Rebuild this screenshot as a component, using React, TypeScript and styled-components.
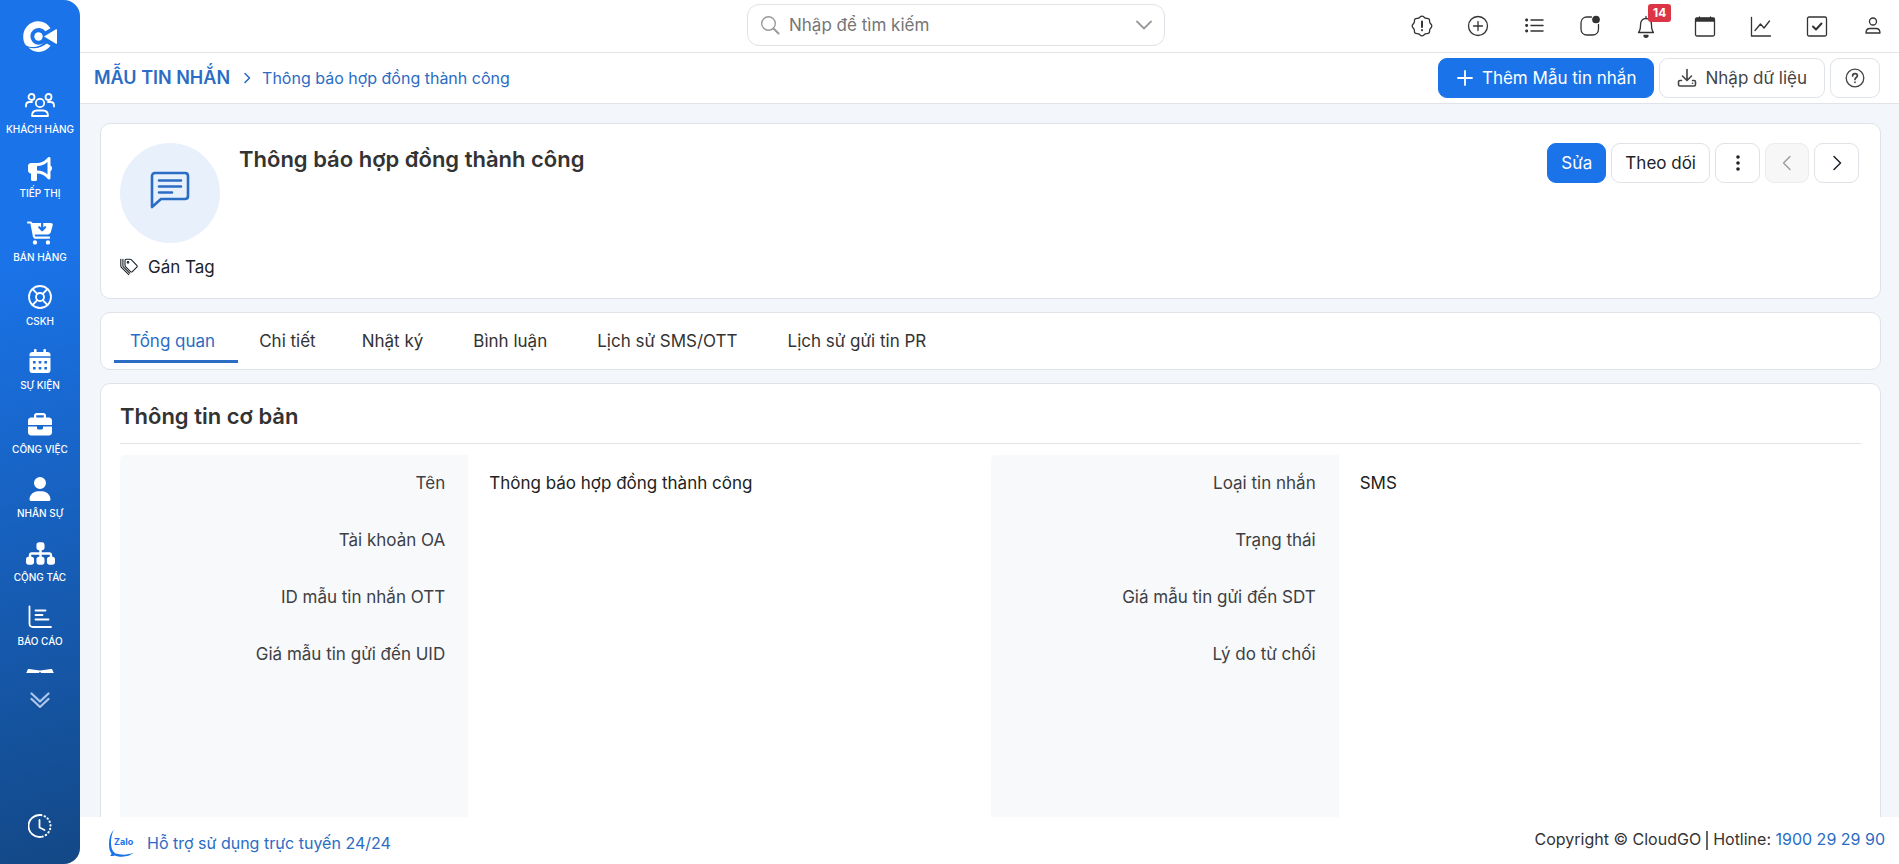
import React from "react";
import styled, { createGlobalStyle, css } from "styled-components";
import { FaBullhorn, FaCartArrowDown, FaBriefcase, FaUser, FaSitemap } from "react-icons/fa6";

const color = {
  primary: "#1a73e8",
  link: "#2b6cc4",
  text: "#333333",
  dark: "#1c2329",
  border: "#dfe2e6",
  canvas: "#f3f7fb",
  label: "#f8f9fb",
};

const GlobalStyle = createGlobalStyle`
  *, *::before, *::after { box-sizing: border-box; }
  body {
    margin: 0;
    font-family: Inter, "Liberation Sans", sans-serif;
    font-size: 17px;
    line-height: 24px;
    color: ${color.text};
    background: #fff;
  }
  button, input { font: inherit; color: inherit; }
  a { color: ${color.link}; text-decoration: none; }
  h1, h2, ul, ol, dl, dd, p { margin: 0; padding: 0; }
  ul, ol { list-style: none; }
  svg { display: block; flex: none; }
`;

const Page = styled.div`
  display: flex;
  height: 100vh;
`;

/* Sidebar */

const Sidebar = styled.aside`
  flex: none;
  display: flex;
  flex-direction: column;
  align-items: center;
  width: 80px;
  padding: 20px 0 26px;
  color: #fff;
  background: linear-gradient(165deg, #1a73e8 0%, #1a73e8 30%, #134886 100%);
  border-radius: 0 16px 16px 0;
`;

const SideNav = styled.nav`
  flex: 0 1 580px;
  min-height: 0;
  width: 100%;
  margin-top: 40px;
  overflow: hidden;
`;

const SideLink = styled.a`
  display: flex;
  flex-direction: column;
  align-items: center;
  gap: 5px;
  height: 64px;
  color: #fff;
  font-size: 10px;
  font-weight: 500;
  line-height: 14px;
  white-space: nowrap;
`;

const SideIcon = styled.span`
  display: flex;
  align-items: center;
  justify-content: center;
  height: 24px;
`;

const SideButton = styled.button<{ $bottom?: boolean }>`
  padding: 0;
  border: 0;
  background: none;
  color: #fff;
  cursor: pointer;
  margin-top: ${(p) => (p.$bottom ? "auto" : "18px")};
`;

/* Top bars */

const Main = styled.div`
  flex: 1;
  min-width: 0;
  display: flex;
  flex-direction: column;
`;

const TopBar = styled.header`
  flex: none;
  display: grid;
  grid-template-columns: 667fr 418fr 734fr;
  align-items: center;
  height: 53px;
  padding-bottom: 2px;
  border-bottom: 1px solid ${color.border};
`;

const SearchBox = styled.label`
  grid-column: 2;
  display: flex;
  align-items: center;
  gap: 9px;
  height: 42px;
  padding: 0 12px;
  border: 1px solid ${color.border};
  border-radius: 12px;
  color: #9a9a9a;
`;

const SearchInput = styled.input`
  flex: 1;
  min-width: 0;
  padding: 0;
  border: 0;
  outline: 0;
  background: none;
  &::placeholder { color: #757575; opacity: 1; }
`;

const Tools = styled.div`
  display: flex;
  justify-content: flex-end;
  gap: 35px;
  padding: 2px 14px 0 0;
`;

const ToolGroup = styled.div`
  display: flex;
  gap: 32px;
`;

const ToolButton = styled.button`
  position: relative;
  display: flex;
  align-items: center;
  justify-content: center;
  width: 24px;
  height: 24px;
  padding: 0;
  border: 0;
  background: none;
  cursor: pointer;
`;

const Badge = styled.span`
  position: absolute;
  left: 14px;
  top: -10px;
  padding: 0 5px;
  border-radius: 3px;
  background: #dc3545;
  color: #fff;
  font-size: 12px;
  font-weight: 700;
  line-height: 18px;
`;

const ActionBar = styled.div`
  flex: none;
  display: flex;
  align-items: center;
  justify-content: space-between;
  height: 51px;
  padding: 0 19px 0 14px;
  border-bottom: 1px solid ${color.border};
`;

const Crumbs = styled.ol`
  display: flex;
  align-items: center;
  gap: 11px;
  font-size: 16px;
  color: ${color.link};
`;

const CrumbItem = styled.li<{ $lead?: boolean }>`
  display: flex;
  align-items: center;
  gap: 13px;
  ${(p) => p.$lead && css`font-size: 18px; font-weight: 600;`}
`;

const ButtonRow = styled.div`
  display: flex;
  gap: 5px;
`;

const Button = styled.button<{ $primary?: boolean; $wide?: boolean; $icon?: number }>`
  display: flex;
  align-items: center;
  justify-content: center;
  gap: 8px;
  height: 40px;
  padding: 0 ${(p) => (p.$icon ? 0 : p.$wide ? 17 : 13)}px;
  ${(p) => p.$icon && `width: ${p.$icon}px;`}
  border: 1px solid ${(p) => (p.$primary ? color.primary : color.border)};
  border-radius: 9px;
  background: ${(p) => (p.$primary ? color.primary : "#fff")};
  color: ${(p) => (p.$primary ? "#fff" : p.$wide ? "#444" : color.dark)};
  white-space: nowrap;
  cursor: pointer;
  &:disabled { background: #f7f7f7; color: #999; border-color: #ececec; }
`;

/* Content */

const Content = styled.main`
  flex: 1;
  min-height: 0;
  display: flex;
  flex-direction: column;
  gap: 13px;
  padding: 19px 18px 0 20px;
  background: ${color.canvas};
  overflow-y: auto;
  scrollbar-width: none;
`;

const Card = styled.section`
  flex: none;
  border: 1px solid ${color.border};
  border-radius: 10px;
  background: #fff;
`;

const SummaryCard = styled(Card)`
  padding: 19px 21px 19px 19px;
`;

const SummaryTop = styled.div`
  display: flex;
  align-items: flex-start;
  gap: 19px;
`;

const Avatar = styled.div`
  flex: none;
  display: flex;
  align-items: center;
  justify-content: center;
  width: 100px;
  height: 100px;
  padding-bottom: 6px;
  border-radius: 50%;
  background: #e8f0fc;
  color: ${color.link};
`;

const Title = styled.h1`
  flex: 1;
  font-size: 22px;
  font-weight: 600;
  line-height: 32px;
`;

const TagButton = styled.button`
  display: flex;
  align-items: center;
  gap: 10px;
  margin-top: 12px;
  padding: 0;
  border: 0;
  background: none;
  color: ${color.dark};
  cursor: pointer;
`;

const TabCard = styled(Card)`
  padding: 0 13px 6px;
`;

const TabList = styled.div`
  display: flex;
`;

const Tab = styled.button<{ $active?: boolean; $tight?: boolean }>`
  height: 50px;
  padding: 8px ${(p) => (p.$active ? 23 : p.$tight ? 21 : 25)}px 0 ${(p) => (p.$active ? 16 : p.$tight ? 21 : 25)}px;
  border: 0;
  border-bottom: 3px solid ${(p) => (p.$active ? color.link : "transparent")};
  background: none;
  color: ${(p) => (p.$active ? color.link : color.text)};
  white-space: nowrap;
  cursor: pointer;
`;

const DetailCard = styled(Card)`
  padding: 16px 19px 19px;
`;

const SectionTitle = styled.h2`
  padding-bottom: 11px;
  border-bottom: 1px solid ${color.border};
  font-size: 22px;
  font-weight: 600;
  line-height: 32px;
`;

const FieldColumns = styled.div`
  display: grid;
  grid-template-columns: 1fr 1fr;
  margin-top: 11px;
`;

const FieldList = styled.dl`
  min-height: 400px;
  border-radius: 5px;
  background: linear-gradient(to right, ${color.label} 40%, transparent 40%);
`;

const Field = styled.div`
  display: grid;
  grid-template-columns: 40% 60%;
  height: 57px;
  padding-top: 16px;
`;

const FieldLabel = styled.dt`
  padding-right: 23px;
  text-align: right;
  color: #3d4045;
`;

const FieldValue = styled.dd`
  padding-left: 21px;
  color: #222;
`;

const Footer = styled.footer`
  flex: none;
  display: flex;
  justify-content: space-between;
  height: 47px;
  padding: 10px 14px 0 28px;
  font-size: 16px;
`;

const SupportLink = styled.a`
  display: flex;
  align-items: center;
  gap: 12px;
  height: 32px;
`;

const Separator = styled.span`
  display: inline-block;
  width: 2px;
  height: 19px;
  margin: 0 5px;
  background: #666;
  vertical-align: middle;
`;

/* Line icons */

type LineProps = { size?: number; w?: number; h?: number; box?: string; stroke?: number; children: React.ReactNode };

const Line = ({ size = 24, w, h, box = "0 0 24 24", stroke = 1.3, children }: LineProps) => (
  <svg
    width={w ?? size}
    height={h ?? size}
    viewBox={box}
    fill="none"
    stroke="currentColor"
    strokeWidth={stroke}
    strokeLinecap="round"
    strokeLinejoin="round"
    aria-hidden="true"
  >
    {children}
  </svg>
);

const Logo = () => (
  <svg width="36" height="33" viewBox="0 0 36 33" aria-label="CloudGO">
    <path d="M28.5 8.2A15 15 0 0 0 16 1.2C8 1.2 1.2 8 1.2 16.4c0 4.200 1 7 3 9.200C10 28.500 18 27.200 23 22a8.400 8.400 0 1 1 .4-10.800z" fill="#fff" />
    <path d="M6.500 27.600c6 1.800 13 .4 18.300-4l3.800 2.200A15.500 15.500 0 0 1 16.500 32c-4 0-7.500-1.600-10-4.400z" fill="#fff" />
    <circle cx="16.500" cy="16.500" r="4.200" fill="#fff" />
    <path d="M22 16.500 34 9.300c.6-.3 1 0 1 .6v13.400c0 .6-.5.8-1 .5z" fill="#fff" />
  </svg>
);

const PeopleIcon = () => (
  <Line w={30} h={24} box="0 0 30 24" stroke={1.8}>
    <circle cx="6.500" cy="4" r="3" />
    <circle cx="23.500" cy="4" r="3" />
    <circle cx="15" cy="10" r="4.200" />
    <path d="M1 13.500v-1C1 10.500 2.500 9 4.500 9H7M29 13.500v-1C29 10.500 27.500 9 25.500 9H23M7 23c0-3.500 2-5.500 5-5.500h6c3 0 5 2 5 5.500z" />
  </Line>
);

const LifeRingIcon = () => (
  <Line stroke={1.800}>
    <circle cx="12" cy="12" r="11" />
    <circle cx="12" cy="12" r="4" />
    <path d="m4.500 4 4.800 4.800M19.500 4l-4.800 4.800M4.500 20l4.800-4.800M19.500 20l-4.800-4.800" />
  </Line>
);

const CalendarDaysIcon = () => (
  <svg width="22" height="24" viewBox="0 0 22 24" fill="#fff" aria-hidden="true">
    <path d="M5 1.200a1.200 1.200 0 0 1 2.600 0V3h6.800V1.200a1.200 1.200 0 0 1 2.600 0V3h1.800C20.300 3 21.500 4 21.500 5.500V7.300H.5V5.500C.5 4 1.700 3 3.200 3H5z" />
    <path
      fillRule="evenodd"
      d="M.5 8.700h21v12.600c0 1.500-1 2.700-2.500 2.700H3C1.500 24 .5 22.800.5 21.300zM4 12v2.600h2.600V12zm5.700 0v2.600h2.600V12zm5.700 0v2.600H18V12zM4 18v2.600h2.600V18zm5.700 0v2.600h2.600V18zm5.700 0v2.600H18V18z"
    />
  </svg>
);

const ReportIcon = () => (
  <Line stroke={1.800}>
    <path d="M1.500 1.500v17c0 2 1.500 3.500 3.500 3.500h18M7.500 5.500h10M7.500 10h7M7.500 14.500h13" />
  </Line>
);

const BoxOpenIcon = () => (
  <svg width="30" height="24" viewBox="0 0 30 24" fill="#fff" aria-hidden="true">
    <path d="M3 0h1l11 1.400L26 0h1l2 4.500c.2.500 0 1-.5 1.200L19 8.500l-4-6-4 6-9.500-2.800C1 5.500.8 5 1 4.500z" />
    <path d="M3.500 8.500 12 11l3-4.500L18 11l8.500-2.500V19L15 23 3.500 19z" />
  </svg>
);

const sideItems = [
  { label: "KHÁCH HÀNG", icon: <PeopleIcon /> },
  { label: "TIẾP THỊ", icon: <FaBullhorn size={24} /> },
  { label: "BÁN HÀNG", icon: <FaCartArrowDown size={26} /> },
  { label: "CSKH", icon: <LifeRingIcon /> },
  { label: "SỰ KIỆN", icon: <CalendarDaysIcon /> },
  { label: "CÔNG VIỆC", icon: <FaBriefcase size={24} /> },
  { label: "NHÂN SỰ", icon: <FaUser size={24} /> },
  { label: "CỘNG TÁC", icon: <FaSitemap size={29} /> },
  { label: "BÁO CÁO", icon: <ReportIcon /> },
  { label: "", icon: <BoxOpenIcon /> },
];

const leftTools = [
  {
    name: "Cảnh báo",
    icon: (
      <Line>
        <path d="M12 2.200c1.700 0 2.200 1.500 3.400 2s2.600-.2 3.600.8.300 2.400.8 3.600 2 1.700 2 3.400-1.500 2.200-2 3.400.2 2.600-.8 3.600-2.400.3-3.600.8-1.700 2-3.400 2-2.200-1.500-3.400-2-2.600.2-3.600-.8-.3-2.400-.8-3.600-2-1.700-2-3.400 1.500-2.200 2-3.400-.2-2.600.8-3.600 2.400-.3 3.600-.8 1.700-2 3.400-2z" />
        <path d="M12 7.500V13M12 16v.3" strokeWidth="2" />
      </Line>
    ),
  },
  { name: "Tạo nhanh", icon: <Line><circle cx="12" cy="12" r="9.500" /><path d="M12 7.500v9M7.500 12h9" /></Line> },
  {
    name: "Danh sách",
    icon: (
      <Line stroke={1.500}>
        <path d="M9 6h12M9 11.500h12M9 17h12" />
        <path d="M4.500 6h.3M4.500 11.500h.3M4.500 17h.3" strokeWidth="2.800" />
      </Line>
    ),
  },
  {
    name: "Trạng thái",
    icon: (
      <Line>
        <path d="M13.500 3H9C5.500 3 3 5.500 3 9v6c0 3.500 2.500 6 6 6h5.500c3.500 0 6-2.500 6-6v-4.500" />
        <circle cx="18" cy="5.500" r="3.200" fill="currentColor" />
      </Line>
    ),
  },
];

const rightTools = [
  {
    name: "Lịch",
    icon: (
      <Line>
        <rect x="2.500" y="4" width="19" height="18" rx="1.500" />
        <path d="M3 4.500h18V7H3zM6.500 3v2M17.500 3v2" fill="currentColor" />
      </Line>
    ),
  },
  { name: "Thống kê", icon: <Line><path d="M2.500 3.500V22h19M6 16.500l5.500-6.500 3.500 4L20.500 7" /></Line> },
  {
    name: "Công việc",
    icon: <Line><rect x="2.500" y="3" width="19" height="19" rx="1.500" /><path d="m8 12.500 3 3 5.500-6" strokeWidth="2" /></Line>,
  },
  {
    name: "Tài khoản",
    icon: <Line><circle cx="12" cy="7.500" r="3.500" /><path d="M5 19c0-3 1.500-4.500 4-4.500h6c2.500 0 4 1.500 4 4.500z" /></Line>,
  },
];

const tabs = [
  { name: "Tổng quan", active: true },
  { name: "Chi tiết", tight: true },
  { name: "Nhật ký" },
  { name: "Bình luận" },
  { name: "Lịch sử SMS/OTT" },
  { name: "Lịch sử gửi tin PR" },
];

const fieldColumns = [
  [
    ["Tên", "Thông báo hợp đồng thành công"],
    ["Tài khoản OA", ""],
    ["ID mẫu tin nhắn OTT", ""],
    ["Giá mẫu tin gửi đến UID", ""],
  ],
  [
    ["Loại tin nhắn", "SMS"],
    ["Trạng thái", ""],
    ["Giá mẫu tin gửi đến SDT", ""],
    ["Lý do từ chối", ""],
  ],
];

export default function App() {
  return (
    <Page>
      <GlobalStyle />
      <Sidebar>
        <Logo />
        <SideNav>
          {sideItems.map((item, i) => (
            <SideLink key={i} href="#">
              <SideIcon>{item.icon}</SideIcon>
              {item.label}
            </SideLink>
          ))}
        </SideNav>
        <SideButton aria-label="Xem thêm">
          <svg width="22" height="20" viewBox="0 0 22 20" fill="none" stroke="#a9c4ea" strokeWidth="2.400" strokeLinecap="round" strokeLinejoin="round">
            <g stroke="#123f78" strokeOpacity=".35" transform="translate(0 2)"><path d="m2.500 8 8.500 8 8.500-8" /></g>
            <path d="m2.500 2.500 8.500 8 8.500-8M2.500 8l8.500 8 8.500-8" />
          </svg>
        </SideButton>
        <SideButton $bottom aria-label="Lịch sử">
          <Line stroke={1.800}>
            <path d="M13 1.100A11 11 0 1 0 13 22.900" />
            <path d="M13 1.100a11 11 0 0 1 0 21.800" strokeDasharray=".5 3.200" strokeWidth="2" />
            <path d="M11.500 6v7.500l5 2.500" />
          </Line>
        </SideButton>
      </Sidebar>

      <Main>
        <TopBar>
          <SearchBox>
            <Line size={20} box="0 0 20 20" stroke={1.400}>
              <circle cx="8.500" cy="8.500" r="6.800" />
              <path d="m13.500 13.500 5 5" strokeWidth="2" />
            </Line>
            <SearchInput type="text" placeholder="Nhập để tìm kiếm" aria-label="Tìm kiếm" />
            <Line w={16} h={10} box="0 0 16 10" stroke={1.800}><path d="m1 1.500 7 7 7-7" /></Line>
          </SearchBox>
          <Tools>
            <ToolGroup>
              {leftTools.map((t) => <ToolButton key={t.name} aria-label={t.name}>{t.icon}</ToolButton>)}
              <ToolButton aria-label="Thông báo">
                <Line>
                  <path d="M4.500 18.500c1.800-2 2-4 2-7.500 0-4 2-6.500 5.500-6.500s5.500 2.500 5.500 6.500c0 3.500.2 5.500 2 7.500zM12 2.500v2" />
                  <path d="M10 21.300a2 2 0 0 0 4 0z" fill="currentColor" />
                </Line>
                <Badge>14</Badge>
              </ToolButton>
            </ToolGroup>
            <ToolGroup>
              {rightTools.map((t) => <ToolButton key={t.name} aria-label={t.name}>{t.icon}</ToolButton>)}
            </ToolGroup>
          </Tools>
        </TopBar>

        <ActionBar>
          <nav>
            <Crumbs>
              <CrumbItem $lead>
                <a href="#">MẪU TIN NHẮN</a>
                <Line w={8} h={12} box="0 0 8 12" stroke={1.600}><path d="m2 1.500 4.500 4.500L2 10.500" /></Line>
              </CrumbItem>
              <CrumbItem><a href="#">Thông báo hợp đồng thành công</a></CrumbItem>
            </Crumbs>
          </nav>
          <ButtonRow>
            <Button $primary $wide>
              <Line size={18} box="0 0 18 18" stroke={1.800}><path d="M9 2v14M2 9h14" /></Line>
              Thêm Mẫu tin nhắn
            </Button>
            <Button $wide>
              <Line size={20} box="0 0 20 20" stroke={1.600}>
                <path d="M10 1.500V12M5.500 8l4.500 4.500L14.500 8M4.500 12.500H3c-1 0-1.500.6-1.500 1.500v2.500c0 1 .5 1.500 1.500 1.500h14c1 0 1.500-.5 1.500-1.500V14c0-1-.5-1.500-1.500-1.500h-1.500M15.500 15.300h.1" />
              </Line>
              Nhập dữ liệu
            </Button>
            <Button $wide $icon={50} aria-label="Trợ giúp">
              <Line size={20} box="0 0 20 20">
                <circle cx="10" cy="10" r="8.800" />
                <path d="M7.600 8c0-1.500 1-2.400 2.400-2.400s2.400.9 2.400 2.200c0 1.700-2.400 1.800-2.400 3.700M10 14.200v.1" strokeWidth="1.700" />
              </Line>
            </Button>
          </ButtonRow>
        </ActionBar>

        <Content>
          <SummaryCard>
            <SummaryTop>
              <Avatar>
                <Line w={40} h={38} box="0 0 40 38" stroke={2.600}>
                  <path d="M2 36V5c0-1.800 1.200-3 3-3h30c1.800 0 3 1.200 3 3v20c0 1.800-1.200 3-3 3H11zM9 9.500h22M9 15.500h22M9 21.500h13" />
                </Line>
              </Avatar>
              <Title>Thông báo hợp đồng thành công</Title>
              <ButtonRow>
                <Button $primary>Sửa</Button>
                <Button>Theo dõi</Button>
                <Button $icon={45} aria-label="Khác">
                  <Line size={18} box="0 0 18 18" stroke={3.600}><path d="M9 3v.01M9 9v.01M9 15v.01" /></Line>
                </Button>
                <Button $icon={44} disabled aria-label="Trước">
                  <Line size={16} box="0 0 16 16"><path d="m11 1.500-6.500 6.500 6.500 6.500" /></Line>
                </Button>
                <Button $icon={45} aria-label="Sau">
                  <Line size={16} box="0 0 16 16" stroke={1.500}><path d="m5 1.500 6.500 6.500L5 14.500" /></Line>
                </Button>
              </ButtonRow>
            </SummaryTop>
            <TagButton>
              <Line size={18} box="0 0 18 18" stroke={1.100}>
                <path d="M5 2.500c0-.8.5-1.300 1.300-1.300h3.600c.5 0 1 .2 1.300.5l5.600 5.600c.6.600.6 1.300 0 1.900l-4.400 4.400c-.6.6-1.300.6-1.900 0L5.500 8.600C5.200 8.300 5 7.800 5 7.300zM.8 1.200v6.600c0 .6.200 1.100.6 1.500l7.400 7.400M2.900 1.200v6.400c0 .5.200.9.500 1.300l6.300 6.300" />
                <circle cx="8" cy="4.300" r=".8" />
              </Line>
              Gán Tag
            </TagButton>
          </SummaryCard>

          <TabCard>
            <TabList role="tablist">
              {tabs.map((t) => (
                <Tab key={t.name} role="tab" aria-selected={!!t.active} $active={t.active} $tight={t.tight}>
                  {t.name}
                </Tab>
              ))}
            </TabList>
          </TabCard>

          <DetailCard>
            <SectionTitle>Thông tin cơ bản</SectionTitle>
            <FieldColumns>
              {fieldColumns.map((fields, i) => (
                <FieldList key={i}>
                  {fields.map(([name, value]) => (
                    <Field key={name}>
                      <FieldLabel>{name}</FieldLabel>
                      <FieldValue>{value}</FieldValue>
                    </Field>
                  ))}
                </FieldList>
              ))}
            </FieldColumns>
          </DetailCard>
        </Content>

        <Footer>
          <SupportLink href="#">
            <svg width="27" height="28" viewBox="0 0 27 28" aria-hidden="true">
              <path d="M6 .5C2.500 4 1 9 1 15c0 5 1 8 2.500 9.500-.2 1.200-.8 1.800-1.500 2.300 1.600.4 3.200.2 4.500-.4 6 2 14 2 19.500-2.800-5.500 2.500-12.500 2.800-18.500 1C4.500 22.500 3 19 3 14 3 8.500 4 4 6 .5z" fill={color.primary} />
              <text x="6" y="15.500" fontSize="9" fontWeight="700" fill={color.primary}>Zalo</text>
            </svg>
            Hỗ trợ sử dụng trực tuyến 24/24
          </SupportLink>
          <p>
            Copyright © CloudGO
            <Separator />
            Hotline: <a href="tel:1900292990">1900 29 29 90</a>
          </p>
        </Footer>
      </Main>
    </Page>
  );
}
